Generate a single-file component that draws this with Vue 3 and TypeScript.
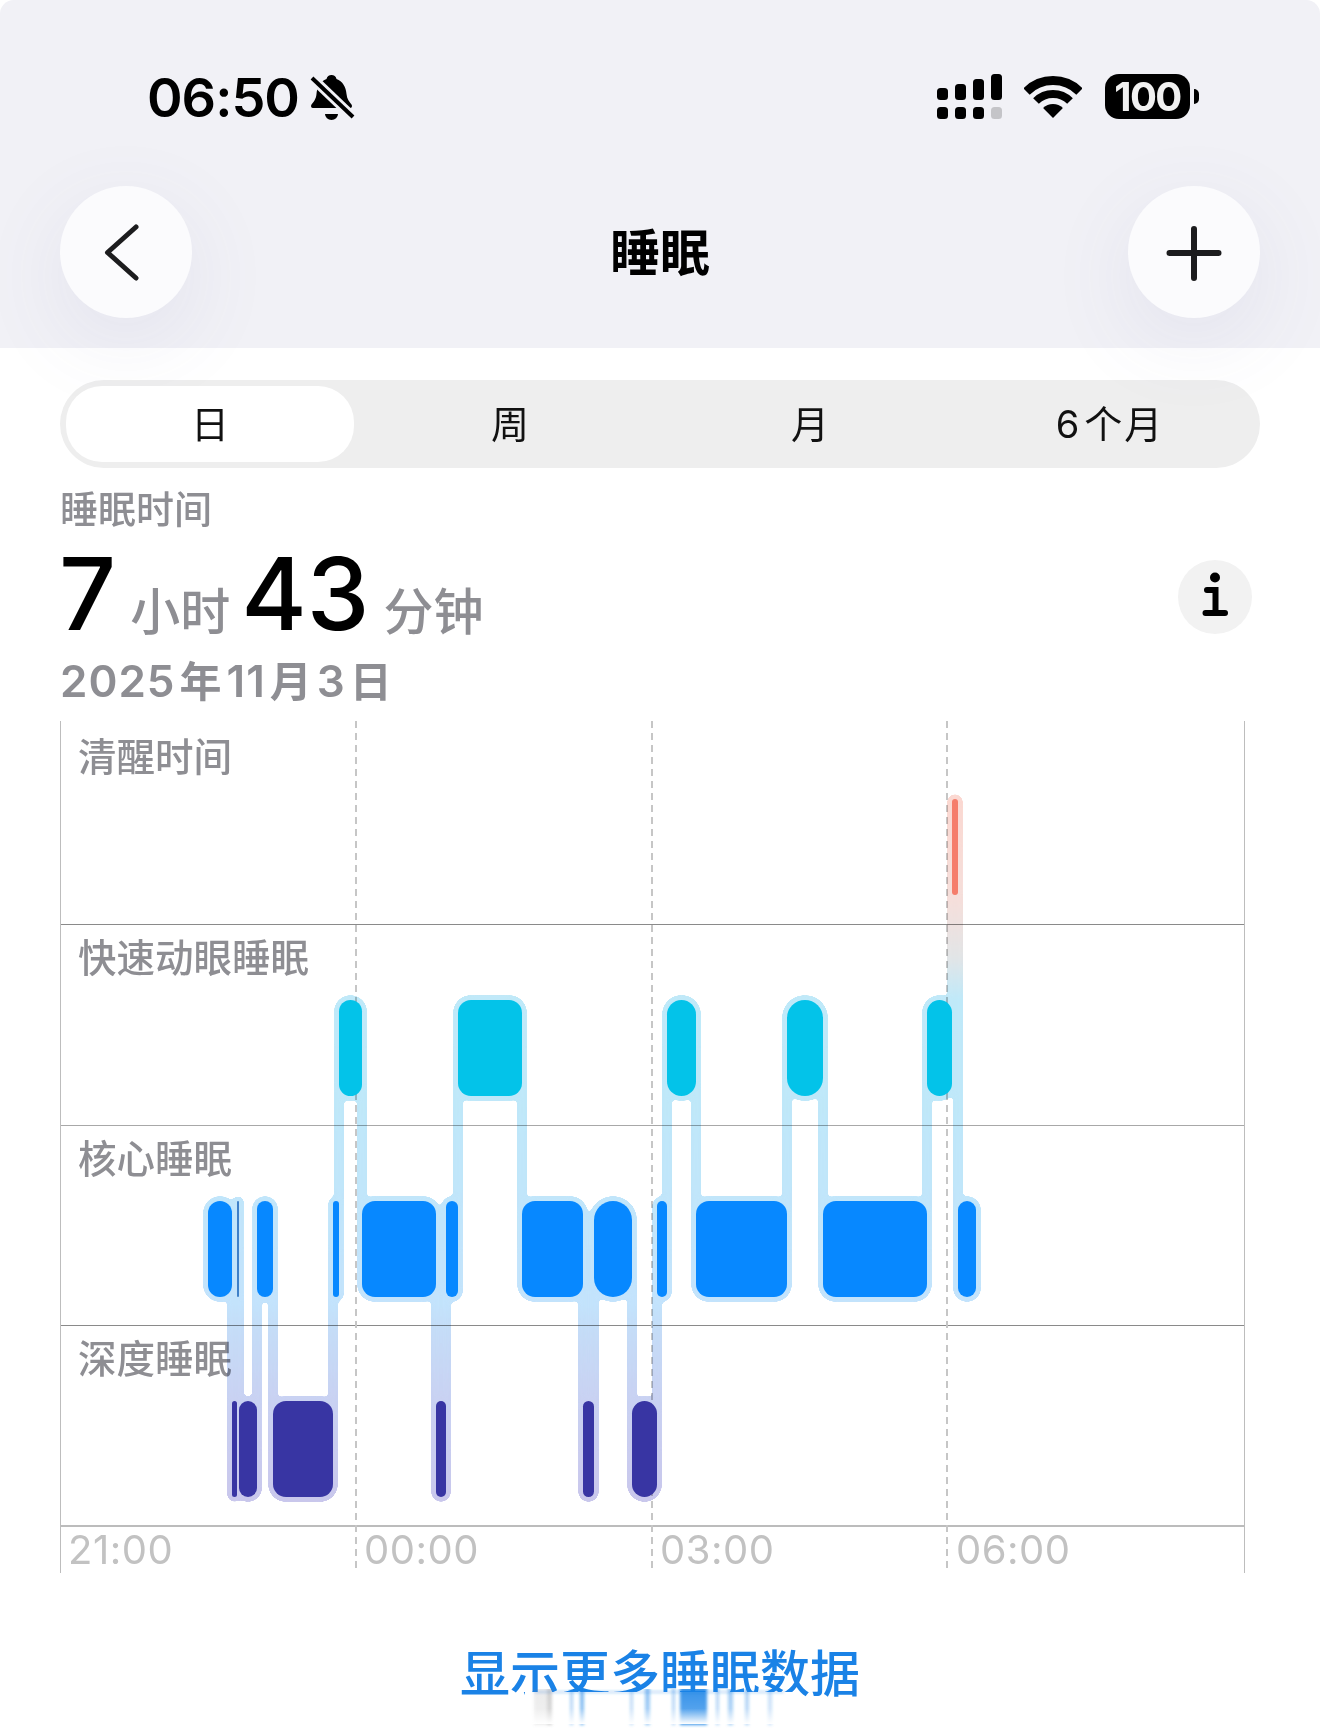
<script setup lang="ts">
type Stage = 'awake' | 'rem' | 'core' | 'deep'

interface Block {
  stage: Stage
  x0: number
  x1: number
}

const tabs = ['日', '周', '月']
const rows = ['清醒时间', '快速动眼睡眠', '核心睡眠', '深度睡眠']
const hours = ['21:00', '00:00', '03:00', '06:00']

const stageTop: Record<Stage, number> = { awake: 798, rem: 999, core: 1200, deep: 1400 }
const stageColor: Record<Stage, string> = {
  awake: '#f57d6b',
  rem: '#03c3e9',
  core: '#0788ff',
  deep: '#3835a3'
}
const barHeight = 96

const blocks: Block[] = [
  { stage: 'core', x0: 208, x1: 232 },
  { stage: 'deep', x0: 232, x1: 237 },
  { stage: 'core', x0: 237, x1: 239 },
  { stage: 'deep', x0: 239, x1: 257 },
  { stage: 'core', x0: 257, x1: 273 },
  { stage: 'deep', x0: 273, x1: 333 },
  { stage: 'core', x0: 333, x1: 339 },
  { stage: 'rem', x0: 339, x1: 362 },
  { stage: 'core', x0: 362, x1: 436 },
  { stage: 'deep', x0: 436, x1: 446 },
  { stage: 'core', x0: 446, x1: 458 },
  { stage: 'rem', x0: 458, x1: 522 },
  { stage: 'core', x0: 522, x1: 583 },
  { stage: 'deep', x0: 583, x1: 594 },
  { stage: 'core', x0: 594, x1: 632 },
  { stage: 'deep', x0: 632, x1: 657 },
  { stage: 'core', x0: 657, x1: 667 },
  { stage: 'rem', x0: 667, x1: 696 },
  { stage: 'core', x0: 696, x1: 787 },
  { stage: 'rem', x0: 787, x1: 823 },
  { stage: 'core', x0: 823, x1: 927 },
  { stage: 'rem', x0: 927, x1: 952 },
  { stage: 'awake', x0: 952, x1: 958 },
  { stage: 'core', x0: 958, x1: 976 }
]

const radius = (w: number) => (w < 45 ? w / 2 : 13)

const bars = blocks.map((b) => ({
  x: b.x0,
  y: stageTop[b.stage],
  w: b.x1 - b.x0,
  r: radius(b.x1 - b.x0),
  fill: b.x1 - b.x0 < 3 ? '#3f80c8' : stageColor[b.stage]
}))

// the pale band joining one block to the next
const links = blocks.slice(1).map((b, i) => {
  const a = stageTop[blocks[i].stage] + barHeight / 2
  const c = stageTop[b.stage] + barHeight / 2
  return { x: b.x0 - 4.4, y: Math.min(a, c), h: Math.abs(a - c) }
})

const streaks = [
  { x: 534, w: 18, o: 0.14, c: '#777777' },
  { x: 547, w: 5, o: 0.22, c: '#777777' },
  { x: 570, w: 3, o: 0.35, c: '#1a82e6' },
  { x: 580, w: 4, o: 0.55, c: '#1a82e6' },
  { x: 630, w: 3, o: 0.3, c: '#1a82e6' },
  { x: 645, w: 5, o: 0.45, c: '#1a82e6' },
  { x: 672, w: 3, o: 0.35, c: '#1a82e6' },
  { x: 680, w: 27, o: 0.85, c: '#1a82e6' },
  { x: 716, w: 3, o: 0.35, c: '#1a82e6' },
  { x: 728, w: 5, o: 0.4, c: '#1a82e6' },
  { x: 745, w: 4, o: 0.35, c: '#1a82e6' },
  { x: 768, w: 4, o: 0.25, c: '#1a82e6' }
]
</script>

<template>
  <main class="page">
    <header class="top">
      <div class="status">
        <div class="clock">
          <span>06:50</span>
          <svg class="bell" viewBox="300 65 65 65">
            <path d="M331.5 75c-2.5 0-4.5 1.6-5 4-6 2.2-9.5 8-10 15-.4 5-3 8-5 10.5-1 1.5-.5 3.5 1.5 3.5h37c2 0 2.5-2 1.5-3.5-2-2.5-4.6-5.5-5-10.5-.5-7-4-12.8-10-15-.5-2.4-2.5-4-5-4z" />
            <path d="M325 114h13a6.5 6 0 0 1-13 0z" />
            <path class="gap" d="M309 75l47 45" />
            <path class="slash" d="M312 78l41 39" />
          </svg>
        </div>
        <div class="indicators">
          <svg class="signal" viewBox="0 0 65 45">
            <rect x="0" y="14" width="11" height="12" rx="3.5" />
            <rect x="18" y="10" width="11" height="16" rx="3.5" />
            <rect x="36" y="5" width="11" height="21" rx="3.5" />
            <rect x="54" y="0" width="11" height="26" rx="3.5" />
            <rect x="0" y="33" width="11" height="12" rx="3.5" />
            <rect x="18" y="33" width="11" height="12" rx="3.5" />
            <rect x="36" y="33" width="11" height="12" rx="3.5" />
            <rect x="54" y="33" width="11" height="12" rx="3.5" fill="#c4c4c8" />
          </svg>
          <svg class="wifi" viewBox="0 0 58 42">
            <path class="arc" stroke-width="9" d="M2.5 15.5A37.5 37.5 0 0 1 55.5 15.5" />
            <path class="arc" stroke-width="8" d="M12 25A24 24 0 0 1 46 25" />
            <path d="M29 42L19.1 32.1A14 14 0 0 1 38.9 32.1Z" />
          </svg>
          <div class="battery">
            <span class="level">100</span>
            <i class="nub"></i>
          </div>
        </div>
      </div>
      <nav class="nav">
        <button class="round back">
          <svg width="44" height="60" viewBox="0 0 44 60">
            <path d="M36 5L7.5 30.5 36 56" />
          </svg>
        </button>
        <h1>睡眠</h1>
        <button class="round plus">
          <svg width="60" height="60" viewBox="0 0 60 60">
            <path d="M30 7V56M5.5 31H54.5" />
          </svg>
        </button>
      </nav>
    </header>

    <section class="body">
      <div class="tabs">
        <div v-for="(t, i) in tabs" :key="t" class="tab" :class="{ active: i === 0 }">{{ t }}</div>
        <div class="tab">6<span class="spaced">个月</span></div>
      </div>

      <p class="caption">睡眠时间</p>
      <div class="total">
        <b>7</b><span class="unit first">小时</span><b class="mins">43</b><span class="unit">分钟</span>
        <div class="info">
          <svg width="30" height="50" viewBox="0 0 30 50">
            <circle cx="15" cy="5.5" r="5" />
            <path d="M7 18H15.5V41M5.5 41H25" />
          </svg>
        </div>
      </div>
      <p class="date">2025<span>年</span>11<span>月</span>3<span>日</span></p>
    </section>

    <section class="chart">
      <div v-for="r in rows" :key="r" class="row">{{ r }}</div>
      <div class="axis">
        <span v-for="h in hours" :key="h">{{ h }}</span>
      </div>

      <div class="ticks">
        <i></i><i></i><i></i><i></i>
      </div>

      <svg class="halos" viewBox="60 722 1185 850">
        <defs>
          <linearGradient id="halo" gradientUnits="userSpaceOnUse" x1="0" y1="794" x2="0" y2="1501">
            <stop offset="0" stop-color="#fbd8d1" />
            <stop offset="0.15" stop-color="#f5dfdb" />
            <stop offset="0.23" stop-color="#e2e5e7" />
            <stop offset="0.29" stop-color="#bfe9f9" />
            <stop offset="0.43" stop-color="#bfe8f9" />
            <stop offset="0.72" stop-color="#c3e3fc" />
            <stop offset="0.76" stop-color="#c5dcf7" />
            <stop offset="0.86" stop-color="#c9d1f2" />
            <stop offset="1" stop-color="#c9c7ec" />
          </linearGradient>
          <filter id="goo" filterUnits="userSpaceOnUse" x="60" y="722" width="1185" height="850" color-interpolation-filters="sRGB">
            <feGaussianBlur in="SourceGraphic" stdDeviation="2.5" />
            <feColorMatrix values="1 0 0 0 0  0 1 0 0 0  0 0 1 0 0  0 0 0 20 -8" />
          </filter>
        </defs>
        <g fill="url(#halo)" filter="url(#goo)">
          <rect v-for="(b, i) in bars" :key="i" :x="b.x - 4.6" :y="b.y - 4.6" :width="b.w + 9.2" :height="barHeight + 9.2" :rx="b.r + 4.6" />
          <rect v-for="(l, i) in links" :key="'l' + i" :x="l.x" :y="l.y" width="8.8" :height="l.h" />
        </g>
      </svg>

      <svg class="bars" viewBox="60 722 1185 850">
        <rect v-for="(b, i) in bars" :key="i" :x="b.x" :y="b.y" :width="b.w" :height="barHeight" :rx="b.r" :fill="b.fill" />
      </svg>
    </section>

    <section class="more">
      <span>显示更多睡眠数据</span>
      <svg class="smear" viewBox="525 1688 275 40">
        <defs>
          <linearGradient id="fade" x1="0" y1="0" x2="0" y2="1">
            <stop offset="0" stop-color="#fff" stop-opacity="0" />
            <stop offset="0.5" stop-color="#fff" stop-opacity="0.12" />
            <stop offset="1" stop-color="#fff" stop-opacity="1" />
          </linearGradient>
          <filter id="soft" filterUnits="userSpaceOnUse" x="525" y="1680" width="275" height="60">
            <feGaussianBlur stdDeviation="1.8" />
          </filter>
        </defs>
        <rect x="525" y="1691" width="275" height="37" fill="#fff" />
        <g filter="url(#soft)">
          <rect x="534" y="1690" width="250" height="2" fill="#1a82e6" opacity="0.3" />
          <rect v-for="s in streaks" :key="s.x" :x="s.x" y="1686" :width="s.w" height="38" :fill="s.c" :opacity="s.o" />
        </g>
        <rect x="525" y="1692" width="275" height="31" fill="url(#fade)" />
      </svg>
    </section>
  </main>
</template>

<style scoped>
.page {
  width: 1320px;
  height: 1735px;
  overflow: hidden;
  background: #fff;
  font-family: Inter, "Noto Sans CJK SC", sans-serif;
  color: #000;
}

.top {
  height: 348px;
  background: #f1f1f6;
  border-radius: 14px 14px 0 0;
  padding: 74px 60px 0;
  box-sizing: border-box;
}
.status {
  display: flex;
  justify-content: space-between;
  height: 45px;
  padding: 0 61px 0 87px;
}
.clock {
  display: flex;
  align-items: center;
  font-size: 54px;
  font-weight: 600;
  letter-spacing: -1px;
  line-height: 49px;
  gap: 1px;
}
.clock span {
  padding-top: 2px;
}
.bell {
  width: 65px;
  height: 65px;
  flex: none;
  margin-top: 2px;
}
.bell .gap {
  stroke: #f1f1f6;
  stroke-width: 10;
  fill: none;
}
.bell .slash {
  stroke: #000;
  stroke-width: 4;
  fill: none;
}
.indicators {
  display: flex;
  align-items: center;
}
.signal {
  width: 65px;
  height: 45px;
}
.wifi {
  width: 58px;
  height: 42px;
  margin: 1px 23px 0 22px;
}
.wifi .arc {
  fill: none;
  stroke: #000;
}
.battery {
  position: relative;
  width: 85px;
  height: 45px;
  border-radius: 14px;
  background: #000;
  display: flex;
  justify-content: center;
  align-items: center;
  margin-right: 9px;
}
.level {
  color: #f1f1f1;
  font-size: 40px;
  font-weight: 700;
  letter-spacing: -1.5px;
  line-height: 45px;
}
.nub {
  position: absolute;
  right: -9px;
  top: 15px;
  width: 5px;
  height: 15px;
  background: #000;
  border-radius: 0 8px 8px 0;
}

.nav {
  display: flex;
  justify-content: space-between;
  align-items: center;
  margin-top: 67px;
}
.nav h1 {
  margin: 2px 0 0;
  font-size: 50px;
  font-weight: 700;
  line-height: 60px;
}
.round {
  width: 132px;
  height: 132px;
  border: none;
  border-radius: 50%;
  background: #fbfbfd;
  box-shadow: 0 24px 90px rgba(90, 90, 150, 0.09);
  display: flex;
  align-items: center;
  justify-content: center;
  padding: 0;
}
.round path {
  fill: none;
  stroke: #1c1c1e;
  stroke-width: 5;
  stroke-linecap: round;
  stroke-linejoin: round;
}
.back svg {
  margin-right: 8px;
}
.plus path {
  stroke-width: 6;
}

.body {
  padding: 32px 60px 0;
}
.tabs {
  display: grid;
  grid-template-columns: repeat(4, 1fr);
  height: 88px;
  background: #eeeeee;
  border-radius: 44px;
}
.tab {
  display: flex;
  align-items: center;
  justify-content: center;
  font-size: 38px;
  line-height: 1;
  color: #111;
}
.tab .spaced {
  margin-left: 5px;
  letter-spacing: 2px;
}
.tab.active {
  background: #fff;
  margin: 6px;
  border-radius: 36px;
}
.caption {
  margin: 19px 0 0;
  font-size: 38px;
  font-weight: 500;
  line-height: 44px;
  color: #8e8e93;
}
.total {
  display: flex;
  align-items: baseline;
  height: 108px;
  margin: 9px 0 0 -1px;
}
.total b {
  font-size: 100px;
  font-weight: 500;
  line-height: 108px;
}
.total .mins {
  margin-left: 11px;
}
.unit {
  font-size: 50px;
  font-weight: 500;
  color: #8e8e93;
  margin-left: 14px;
}
.info {
  align-self: center;
  margin: 5px 8px 0 auto;
  width: 74px;
  height: 74px;
  border-radius: 50%;
  background: #f2f2f2;
  display: flex;
  align-items: center;
  justify-content: center;
}
.info circle {
  fill: #000;
}
.info path {
  fill: none;
  stroke: #000;
  stroke-width: 6;
  stroke-linecap: round;
}
.date {
  margin: 8px 0 0;
  font-size: 44px;
  font-weight: 600;
  line-height: 50px;
  letter-spacing: 1px;
  color: #8e8e93;
}
.date span {
  margin: 0 4px;
  font-size: 42px;
}

.chart {
  position: relative;
  width: 1185px;
  height: 850px;
  margin: 16px 0 0 60px;
}
.row {
  height: 201px;
  box-sizing: border-box;
  padding: 11px 0 0 18px;
  font-size: 38.5px;
  font-weight: 500;
  line-height: 44px;
  color: #8e8e93;
  border-bottom: 1px solid #8a8a8a;
}
.row:first-child {
  height: 202px;
  padding-top: 12px;
}
.row:nth-child(2) {
  border-bottom-color: #a8a8a8;
}
.row:nth-child(3) {
  height: 200px;
}
.row:nth-child(4) {
  padding-top: 11px;
  border-bottom: 2px solid #bcbcbc;
}
.axis {
  display: grid;
  grid-template-columns: repeat(4, 296px);
  color: #c2c2c2;
  font-size: 40px;
  font-weight: 400;
  letter-spacing: 0.5px;
  line-height: 46px;
  height: 46px;
}
.axis span {
  padding-left: 8px;
}
.ticks {
  position: absolute;
  inset: -2px 0 0;
  display: grid;
  grid-template-columns: repeat(4, 1fr);
  border-left: 1px solid #bdbdbd;
  border-right: 1px solid #bdbdbd;
}
.ticks i {
  background: repeating-linear-gradient(to bottom, #c6c6c6 0 7px, transparent 7px 12px) right top / 2px 100% no-repeat;
}
.ticks i:last-child {
  background: none;
}
.halos,
.bars {
  position: absolute;
  left: 0;
  top: 0;
  width: 1185px;
  height: 850px;
}
.halos {
  mix-blend-mode: multiply;
}

.more {
  position: relative;
  margin-top: 76px;
  text-align: center;
  color: #1a82e6;
  font-size: 50px;
  font-weight: 500;
  line-height: 50px;
}
.smear {
  position: absolute;
  left: 525px;
  top: 40px;
  width: 275px;
  height: 40px;
}
</style>

<style>
html,
body {
  margin: 0;
  background: #fff;
}
</style>
